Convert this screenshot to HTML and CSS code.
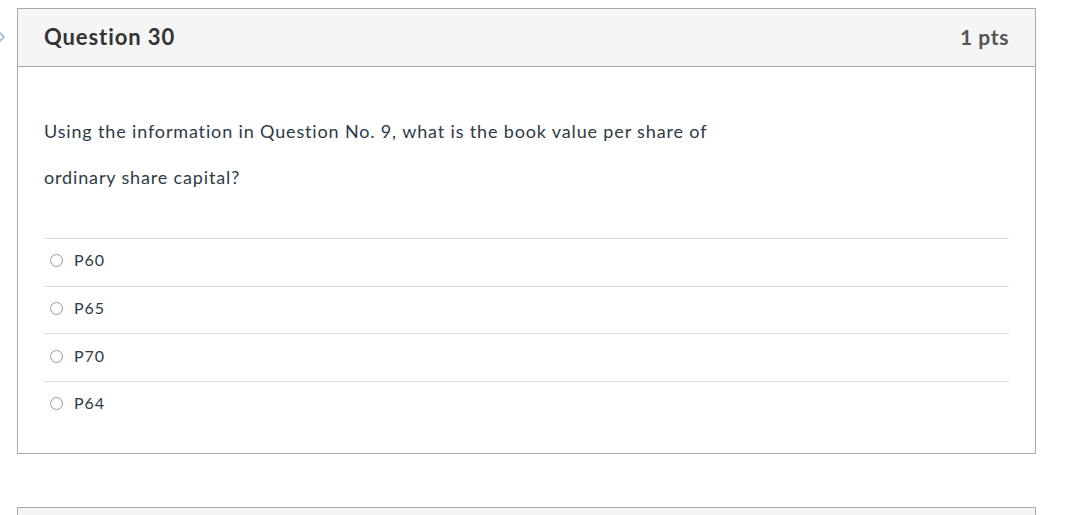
FILE: index.html
```html
<!DOCTYPE html>
<html>
<head>
<meta charset="utf-8">
<link rel="stylesheet" href="styles.css">
</head>
<body>
<div class="page">
  <svg class="nav-arrow" width="12" height="20" viewBox="0 0 12 20"><path d="M1 4 L7 10 L1 16" fill="none" stroke="#9dbbd0" stroke-width="1.6"/></svg>
  <div class="quiz">
    <div class="card">
      <div class="card-header">
        <span class="q-name">Question 30</span>
        <span class="q-points">1 pts</span>
      </div>
      <div class="card-body">
        <p class="q-text">Using the information in Question No. 9, what is the book value per share of</p>
        <p class="q-text">ordinary share capital?</p>
        <div class="answers">
          <label class="answer"><span class="radio"></span><span class="answer-text">P60</span></label>
          <label class="answer"><span class="radio"></span><span class="answer-text">P65</span></label>
          <label class="answer"><span class="radio"></span><span class="answer-text">P70</span></label>
          <label class="answer"><span class="radio"></span><span class="answer-text">P64</span></label>
        </div>
      </div>
    </div>
    <div class="card next">
      <div class="card-header short"></div>
    </div>
  </div>
</div>
</body>
</html>
```
FILE: styles.css
```css
html, body {
  margin: 0;
  padding: 0;
  background: #fff;
  font-family: Lato, "Liberation Sans", sans-serif;
  color: #2d3b45;
  overflow: hidden;
}
.page {
  position: relative;
  padding: 8px 0 0 17px;
  width: 1019px;
}
.nav-arrow {
  position: absolute;
  left: -3px;
  top: 27px;
}
.quiz {
  display: flex;
  flex-direction: column;
  gap: 53px;
}
.card {
  border: 1px solid #a9a9a9;
  background: #fff;
}
.card-header {
  display: flex;
  justify-content: space-between;
  align-items: center;
  height: 55px;
  padding: 0 26px 2px;
  background: #f5f5f5;
  border-bottom: 1px solid #a9a9a9;
}
.card-header.short {
  border-bottom: none;
  height: 20px;
}
.q-name {
  font-size: 22px;
  font-weight: 700;
  letter-spacing: 0.9px;
  color: #333;
}
.q-points {
  font-size: 21px;
  font-weight: 700;
  letter-spacing: 0.6px;
  color: #555;
}
.card-body {
  padding: 51px 26px 24px;
}
.q-text {
  margin: 0 0 19px;
  font-size: 18px;
  line-height: 27px;
  letter-spacing: 0.85px;
  color: #2d3b45;
}
.answers {
  margin-top: 47px;
}
.answer {
  display: flex;
  align-items: center;
  gap: 11px;
  height: 46.67px;
  padding-left: 6px;
  border-top: 1px solid #ddd;
}
.radio {
  width: 13px;
  height: 13px;
  box-sizing: border-box;
  border: 1px solid #999;
  border-radius: 50%;
  background: #fff;
  margin-top: -3px;
}
.answer-text {
  font-size: 16px;
  letter-spacing: 0.9px;
  color: #2d3b45;
  margin-top: -5px;
}
```
